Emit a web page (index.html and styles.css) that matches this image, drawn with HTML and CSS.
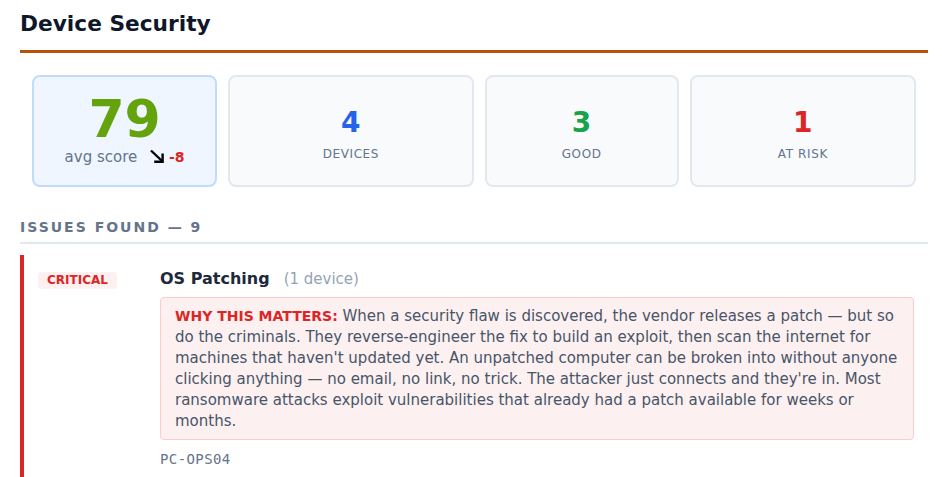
FILE: index.html
```html
<!DOCTYPE html>
<html lang="en">
<head>
<meta charset="utf-8">
<title>Device Security</title>
<link rel="stylesheet" href="styles.css">
</head>
<body>
<main class="page">
  <h1 class="page-title">Device Security</h1>

  <section class="stats">
    <div class="stat stat-score">
      <div class="score-value">79</div>
      <div class="score-label">avg score <span class="trend"><svg class="trend-arrow" width="16" height="14" viewBox="0 0 16 14" aria-hidden="true"><path d="M2 1.5 L13 12" stroke="#000" stroke-width="2.4" fill="none"/><path d="M13.6 4.5 V12.8 H5.2" stroke="#000" stroke-width="2.4" fill="none"/></svg><span class="trend-delta">-8</span></span></div>
    </div>
    <div class="stat">
      <div class="stat-value blue">4</div>
      <div class="stat-label">Devices</div>
    </div>
    <div class="stat">
      <div class="stat-value green">3</div>
      <div class="stat-label">Good</div>
    </div>
    <div class="stat">
      <div class="stat-value red">1</div>
      <div class="stat-label">At risk</div>
    </div>
  </section>

  <h2 class="section-title">Issues found — 9</h2>

  <article class="issue issue-critical">
    <div class="issue-badge-col"><span class="badge">CRITICAL</span></div>
    <div class="issue-body">
      <div class="issue-head"><span class="issue-name">OS Patching</span><span class="issue-count">(1 device)</span></div>
      <p class="why"><strong class="why-label">WHY THIS MATTERS:</strong> When a security flaw is discovered, the vendor releases a patch — but so do the criminals. They reverse-engineer the fix to build an exploit, then scan the internet for machines that haven't updated yet. An unpatched computer can be broken into without anyone clicking anything — no email, no link, no trick. The attacker just connects and they're in. Most ransomware attacks exploit vulnerabilities that already had a patch available for weeks or months.</p>
      <div class="device-list">PC-OPS04</div>
    </div>
  </article>
</main>
</body>
</html>
```

FILE: styles.css
```css
* { box-sizing: border-box; }

html, body {
  margin: 0;
  background: #ffffff;
}

body {
  font-family: "DejaVu Sans", "Noto Sans", sans-serif;
  color: #1e293b;
  padding: 11px 14px 0 20px;
}

.page-title {
  margin: 0;
  font-size: 21.7px;
  line-height: 26px;
  font-weight: 700;
  color: #0f172a;
  padding-bottom: 13px;
  border-bottom: 3px solid #b45309;
}

.stats {
  display: grid;
  grid-template-columns: 185fr 245fr 194fr 226fr;
  gap: 11px;
  margin: 22px 12px 0 12px;
}

.stat {
  height: 112px;
  background: #f8fafc;
  border: 2px solid #e2e8f0;
  border-radius: 8px;
  display: flex;
  flex-direction: column;
  align-items: center;
  padding-top: 32px;
}

.stat-score {
  background: #eff6ff;
  border-color: #bfdbfe;
  padding-top: 16px;
}

.score-value {
  font-size: 52px;
  line-height: 52px;
  font-weight: 700;
  color: #65a30d;
}

.score-label {
  margin-top: 2px;
  font-size: 15px;
  line-height: 20px;
  color: #64748b;
  white-space: nowrap;
}

.trend {
  margin-left: 7px;
}

.trend-arrow {
  display: inline-block;
  vertical-align: -1px;
}

.trend-delta {
  margin-left: 4px;
  color: #dc2626;
  font-size: 14px;
  font-weight: 700;
}

.stat-value {
  font-size: 28px;
  line-height: 28px;
  font-weight: 700;
}

.stat-value.blue { color: #2563eb; }
.stat-value.green { color: #16a34a; }
.stat-value.red { color: #dc2626; }

.stat-label {
  margin-top: 9px;
  font-size: 12px;
  line-height: 16px;
  letter-spacing: 0.6px;
  text-transform: uppercase;
  color: #64748b;
}

.section-title {
  margin: 32px 0 0 0;
  font-size: 14px;
  line-height: 17px;
  font-weight: 700;
  letter-spacing: 2px;
  text-transform: uppercase;
  color: #64748b;
  padding-bottom: 6px;
  border-bottom: 2px solid #e2e8f0;
}

.issue {
  margin-top: 11px;
  display: grid;
  grid-template-columns: 122px 1fr;
  padding: 14px 14px 10px 14px;
  border-left: 4px solid #dc2626;
}

.issue-badge-col {
  padding-top: 0;
}

.badge {
  display: inline-block;
  background: #fdf0f0;
  color: #dc2626;
  font-size: 12px;
  line-height: 17px;
  font-weight: 700;
  padding: 0 9px;
  border-radius: 3px;
}

.issue-head {
  display: flex;
  align-items: baseline;
  line-height: 20px;
}

.issue-name {
  font-size: 16px;
  font-weight: 700;
  color: #1e293b;
}

.issue-count {
  margin-left: 14px;
  font-size: 15px;
  color: #94a3b8;
}

.why {
  margin: 8px 0 0 0;
  background: #fcf0f0;
  border: 1px solid #fecaca;
  border-radius: 4px;
  padding: 8px 14px 7px 14px;
  font-size: 15px;
  line-height: 21px;
  color: #475569;
}

.why-label {
  color: #dc2626;
  font-weight: 700;
  font-size: 14px;
}

.device-list {
  margin-top: 10px;
  font-family: "DejaVu Sans Mono", "Liberation Mono", monospace;
  font-size: 14px;
  letter-spacing: 0.4px;
  line-height: 18px;
  color: #64748b;
}
```
